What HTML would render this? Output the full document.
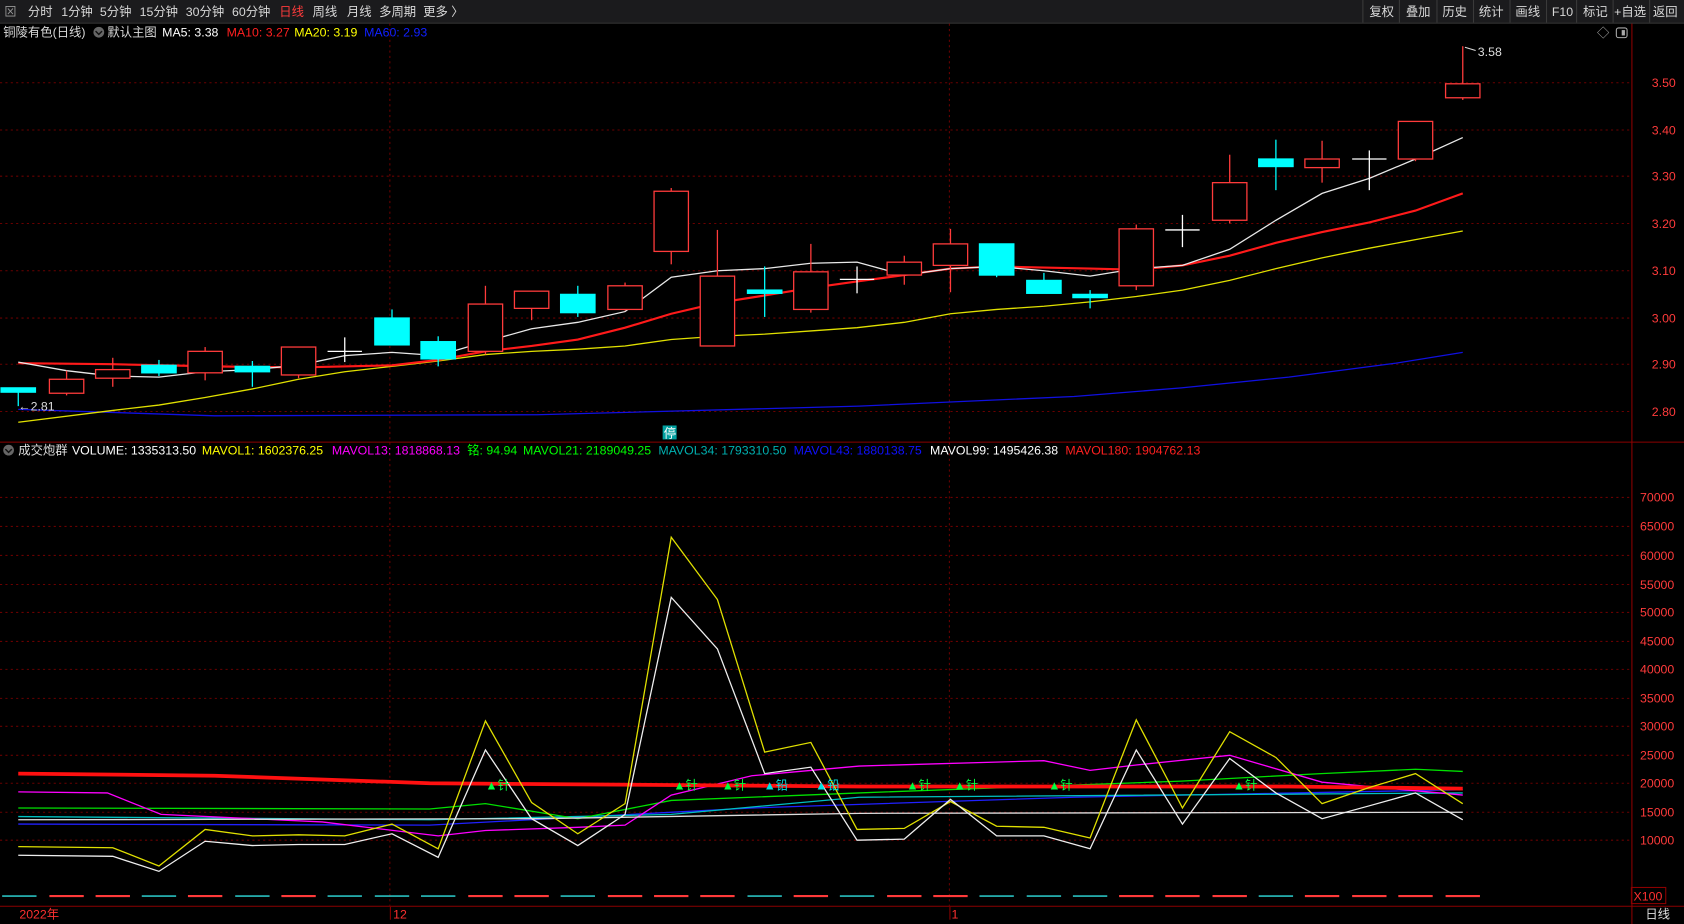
<!DOCTYPE html>
<html><head><meta charset="utf-8"><style>
html,body{margin:0;padding:0;background:#000;overflow:hidden}
svg{display:block}
text{font-family:"Liberation Sans","Noto Sans CJK SC",sans-serif;font-size:11.5px}
</style></head><body>
<svg width="1684" height="924" viewBox="0 0 1568 860" preserveAspectRatio="none" xmlns="http://www.w3.org/2000/svg">
<rect width="1568" height="860" fill="#000"/>
<!-- toolbar -->
<rect x="0" y="0" width="1568" height="21" fill="#1b1b1d"/>
<line x1="0" y1="21.5" x2="1568" y2="21.5" stroke="#3a3a3a"/>
<g fill="#d8d8d8">
<text x="4" y="15" font-size="10" fill="#999">⊠</text>
<text x="26" y="15">分时</text><text x="57" y="15">1分钟</text><text x="93" y="15">5分钟</text>
<text x="130" y="15">15分钟</text><text x="173" y="15">30分钟</text><text x="216" y="15">60分钟</text>
<text x="260" y="15" fill="#ff3b3b">日线</text><text x="291" y="15">周线</text><text x="323" y="15">月线</text>
<text x="353" y="15">多周期</text><text x="394" y="15">更多 〉</text>
</g>
<g stroke="#3a3a3a"><line x1="1269" y1="0" x2="1269" y2="21"/><line x1="1303" y1="0" x2="1303" y2="21"/><line x1="1338" y1="0" x2="1338" y2="21"/><line x1="1372" y1="0" x2="1372" y2="21"/><line x1="1406" y1="0" x2="1406" y2="21"/><line x1="1440" y1="0" x2="1440" y2="21"/><line x1="1468" y1="0" x2="1468" y2="21"/><line x1="1502" y1="0" x2="1502" y2="21"/><line x1="1536" y1="0" x2="1536" y2="21"/></g>
<g fill="#d8d8d8" font-size="11">
<text x="1275" y="15" font-size="11">复权</text><text x="1309" y="15" font-size="11">叠加</text><text x="1343" y="15" font-size="11">历史</text><text x="1377" y="15" font-size="11">统计</text>
<text x="1411" y="15" font-size="11">画线</text><text x="1445" y="15" font-size="11">F10</text><text x="1474" y="15" font-size="11">标记</text><text x="1503" y="15" font-size="11">+自选</text><text x="1539" y="15" font-size="11">返回</text>
</g>
<!-- info line -->
<text x="3" y="34" fill="#d8d8d8">铜陵有色(日线)</text>
<circle cx="92" cy="30" r="5" fill="#666"/><path d="M89 29 L92 32 L95 29" stroke="#111" fill="none" stroke-width="1.3"/>
<text x="100" y="34" fill="#d8d8d8">默认主图</text>
<text x="151" y="34" fill="#fff">MA5: 3.38</text>
<text x="211" y="34" fill="#ff2020">MA10: 3.27</text>
<text x="274" y="34" fill="#ffff00">MA20: 3.19</text>
<text x="339" y="34" fill="#1020ff">MA60: 2.93</text>
<text x="1487" y="35" fill="#aaa" font-size="11">◇</text>
<rect x="1505" y="26" width="10" height="9" rx="2" fill="none" stroke="#aaa"/><rect x="1510" y="28" width="3" height="5" fill="#aaa"/>
<!-- frame -->
<g stroke="#8b0000" fill="none">
<line x1="1519.5" y1="22" x2="1519.5" y2="860"/>
<line x1="0" y1="411.5" x2="1568" y2="411.5"/>
<line x1="0" y1="843.5" x2="1568" y2="843.5"/>
</g>
<!-- grid -->
<g stroke="#6a0000" stroke-dasharray="2,3">
<line x1="0" y1="77" x2="1519" y2="77"/><line x1="0" y1="121" x2="1519" y2="121"/><line x1="0" y1="164" x2="1519" y2="164"/><line x1="0" y1="208" x2="1519" y2="208"/><line x1="0" y1="252" x2="1519" y2="252"/><line x1="0" y1="296" x2="1519" y2="296"/><line x1="0" y1="339" x2="1519" y2="339"/><line x1="0" y1="383" x2="1519" y2="383"/>
<line x1="0" y1="463" x2="1519" y2="463"/><line x1="0" y1="490" x2="1519" y2="490"/><line x1="0" y1="517" x2="1519" y2="517"/><line x1="0" y1="544" x2="1519" y2="544"/><line x1="0" y1="570" x2="1519" y2="570"/><line x1="0" y1="597" x2="1519" y2="597"/><line x1="0" y1="623" x2="1519" y2="623"/><line x1="0" y1="650" x2="1519" y2="650"/><line x1="0" y1="676" x2="1519" y2="676"/><line x1="0" y1="703" x2="1519" y2="703"/><line x1="0" y1="729" x2="1519" y2="729"/><line x1="0" y1="756" x2="1519" y2="756"/><line x1="0" y1="782" x2="1519" y2="782"/>
<line x1="363" y1="22" x2="363" y2="843"/><line x1="884" y1="22" x2="884" y2="843"/>
</g>
<line x1="363.5" y1="844" x2="363.5" y2="856" stroke="#8b0000"/><line x1="884.5" y1="844" x2="884.5" y2="856" stroke="#8b0000"/>
<g fill="#ff3b3b" font-size="11">
<text x="1538" y="81">3.50</text><text x="1538" y="125">3.40</text><text x="1538" y="168">3.30</text><text x="1538" y="212">3.20</text><text x="1538" y="256">3.10</text><text x="1538" y="300">3.00</text><text x="1538" y="343">2.90</text><text x="1538" y="387">2.80</text>
<text x="1527" y="467">70000</text><text x="1527" y="494">65000</text><text x="1527" y="521">60000</text><text x="1527" y="548">55000</text><text x="1527" y="574">50000</text><text x="1527" y="601">45000</text><text x="1527" y="627">40000</text><text x="1527" y="654">35000</text><text x="1527" y="680">30000</text><text x="1527" y="707">25000</text><text x="1527" y="733">20000</text><text x="1527" y="760">15000</text><text x="1527" y="786">10000</text>
</g>
<!-- MA lines -->
<polyline fill="none" stroke="#1010e0" stroke-width="1.2" points="17,381 200,387 500,386 800,378 1000,369 1100,361 1200,351 1300,338 1362,328"/>
<polyline fill="none" stroke="#e0e000" stroke-width="1.2" points="17,393 105,382 148,377 191,370 235,362 278,353 321,346 365,341 408,336 452,330 495,327 538,325 582,322 625,316 668,313 712,311 755,308 798,305 842,300 885,292 928,288 972,285 1015,281 1058,276 1101,270 1145,261 1188,250 1231,240 1275,231 1318,223 1362,215"/>
<polyline fill="none" stroke="#ff1a1a" stroke-width="2" points="17,338 105,339 200,341 278,342 365,340 408,335 452,327 495,322 538,316 582,305 625,292 668,282 712,275 755,268 798,262 842,256 885,250 928,248 972,249 1015,250 1058,251 1101,247 1145,238 1188,226 1231,216 1275,207 1318,196 1362,180"/>
<polyline fill="none" stroke="#e8e8e8" stroke-width="1.2" points="17,337 62,345 105,350 148,351 191,346 235,344 278,340 321,331 365,328 408,331 452,318 495,306 538,300 582,290 625,258 668,252 712,250 755,245 798,244 842,256 885,250 928,248 972,252 1015,257 1058,250 1101,247 1145,232 1188,205 1231,180 1275,166 1318,148 1362,128"/>
<!-- candles -->
<g stroke-width="1.2">
<g stroke="#ff3b3b" fill="#000">
<line x1="62" y1="345" x2="62" y2="368"/><rect x="46" y="353" width="32" height="13"/>
<line x1="105" y1="333" x2="105" y2="360"/><rect x="89" y="344" width="32" height="8"/>
<line x1="191" y1="323" x2="191" y2="354"/><rect x="175" y="327" width="32" height="20"/>
<line x1="278" y1="323" x2="278" y2="352"/><rect x="262" y="323" width="32" height="26"/>
<line x1="452" y1="266" x2="452" y2="330"/><rect x="436" y="283" width="32" height="44"/>
<line x1="495" y1="271" x2="495" y2="298"/><rect x="479" y="271" width="32" height="16"/>
<line x1="582" y1="263" x2="582" y2="289"/><rect x="566" y="266" width="32" height="22"/>
<line x1="625" y1="175" x2="625" y2="246"/><rect x="609" y="178" width="32" height="56"/>
<line x1="668" y1="214" x2="668" y2="322"/><rect x="652" y="257" width="32" height="65"/>
<line x1="755" y1="227" x2="755" y2="291"/><rect x="739" y="253" width="32" height="35"/>
<line x1="842" y1="238" x2="842" y2="265"/><rect x="826" y="244" width="32" height="12"/>
<line x1="885" y1="213" x2="885" y2="272"/><rect x="869" y="227" width="32" height="20"/>
<line x1="1058" y1="209" x2="1058" y2="270"/><rect x="1042" y="213" width="32" height="53"/>
<line x1="1145" y1="144" x2="1145" y2="208"/><rect x="1129" y="170" width="32" height="35"/>
<line x1="1231" y1="131" x2="1231" y2="170"/><rect x="1215" y="148" width="32" height="8"/>
<line x1="1318" y1="113" x2="1318" y2="150"/><rect x="1302" y="113" width="32" height="35"/>
<line x1="1362" y1="43" x2="1362" y2="93"/><rect x="1346" y="78" width="32" height="13"/>
</g>
<g stroke="#00ffff" fill="#00ffff">
<line x1="17" y1="361" x2="17" y2="378"/><rect x="1" y="361" width="32" height="4"/>
<line x1="148" y1="335" x2="148" y2="350"/><rect x="132" y="340" width="32" height="7"/>
<line x1="235" y1="336" x2="235" y2="360"/><rect x="219" y="341" width="32" height="5"/>
<line x1="365" y1="288" x2="365" y2="321"/><rect x="349" y="296" width="32" height="25"/>
<line x1="408" y1="313" x2="408" y2="341"/><rect x="392" y="318" width="32" height="16"/>
<line x1="538" y1="266" x2="538" y2="295"/><rect x="522" y="274" width="32" height="17"/>
<line x1="712" y1="248" x2="712" y2="295"/><rect x="696" y="270" width="32" height="3"/>
<line x1="928" y1="227" x2="928" y2="258"/><rect x="912" y="227" width="32" height="29"/>
<line x1="972" y1="254" x2="972" y2="273"/><rect x="956" y="261" width="32" height="12"/>
<line x1="1015" y1="270" x2="1015" y2="287"/><rect x="999" y="274" width="32" height="3"/>
<line x1="1188" y1="130" x2="1188" y2="177"/><rect x="1172" y="148" width="32" height="7"/>
</g>
<g stroke="#fff">
<line x1="321" y1="314" x2="321" y2="337"/><line x1="305" y1="327" x2="337" y2="327"/>
<line x1="798" y1="248" x2="798" y2="273"/><line x1="782" y1="260" x2="814" y2="260"/>
<line x1="1101" y1="200" x2="1101" y2="230"/><line x1="1085" y1="214" x2="1117" y2="214"/>
<line x1="1275" y1="140" x2="1275" y2="177"/><line x1="1259" y1="148" x2="1291" y2="148"/>
</g>
</g>
<text x="1376" y="52" fill="#ddd" font-size="11">3.58</text><path d="M1364 44 L1374 47" stroke="#ddd"/>
<text x="17" y="382" fill="#ddd" font-size="11">←2.81</text>
<rect x="617" y="396" width="13" height="13" fill="#00a0a0"/><text x="618" y="407" fill="#fff" font-size="10">停</text>
<!-- volume header -->
<circle cx="8" cy="419" r="5" fill="#666"/><path d="M5 418 L8 421 L11 418" stroke="#111" fill="none" stroke-width="1.3"/>
<text x="17" y="423" fill="#ddd">成交炮群</text>
<text x="67" y="423" fill="#fff">VOLUME: 1335313.50</text>
<text x="188" y="423" fill="#ffff00">MAVOL1: 1602376.25</text>
<text x="309" y="423" fill="#ff00ff">MAVOL13: 1818868.13</text>
<text x="435" y="423" fill="#00ff00">铭: 94.94</text>
<text x="487" y="423" fill="#00ff00">MAVOL21: 2189049.25</text>
<text x="613" y="423" fill="#00b0b0">MAVOL34: 1793310.50</text>
<text x="739" y="423" fill="#1010ff">MAVOL43: 1880138.75</text>
<text x="866" y="423" fill="#fff">MAVOL99: 1495426.38</text>
<text x="992" y="423" fill="#ff2020">MAVOL180: 1904762.13</text>
<!-- volume lines -->
<polyline fill="none" stroke="#2020ff" stroke-width="1.2" points="17,767 400,768 700,752 1000,742 1362,735"/>
<polyline fill="none" stroke="#00c0c0" stroke-width="1.2" points="17,760 400,763 625,758 800,742 1362,738"/>
<polyline fill="none" stroke="#00e000" stroke-width="1.2" points="17,752 400,753 452,748 538,762 625,745 800,738 1100,727 1230,720 1318,716 1362,718"/>
<polyline fill="none" stroke="#ff00ff" stroke-width="1.2" points="17,737 100,738 150,758 300,765 408,778 452,773 538,770 582,768 625,740 700,722 800,713 972,708 1015,717 1058,712 1145,703 1231,728 1362,740"/>
<polyline fill="none" stroke="#ddd" stroke-width="1.2" points="17,763 500,762 800,757 1362,756"/>
<polyline fill="none" stroke="#ff1010" stroke-width="3.5" points="17,720 200,722 400,729 800,732 1200,732 1362,734"/>
<polyline fill="none" stroke="#e0e000" stroke-width="1.2" points="17,788 105,789 148,806 191,772 235,778 278,777 321,778 365,767 408,790 452,671 495,747 538,776 582,748 625,500 668,558 712,700 755,691 798,772 842,771 885,746 928,769 972,770 1015,780 1058,670 1101,752 1145,681 1188,705 1231,748 1275,733 1318,720 1362,748"/>
<polyline fill="none" stroke="#eee" stroke-width="1.2" points="17,796 105,797 148,811 191,783 235,787 278,786 321,786 365,776 408,798 452,698 495,762 538,787 582,758 625,556 668,604 712,720 755,714 798,782 842,781 885,744 928,778 972,778 1015,790 1058,698 1101,767 1145,706 1188,738 1231,762 1275,750 1318,738 1362,763"/>
<g fill="#00ff40" font-size="10">
<text x="452" y="735">▲针</text><text x="627" y="735">▲针</text><text x="672" y="735">▲针</text><text x="711" y="735" fill="#00e0e0">▲铅</text><text x="759" y="735" fill="#00e0e0">▲铅</text><text x="844" y="735">▲针</text><text x="888" y="735">▲针</text><text x="976" y="735">▲针</text><text x="1148" y="735">▲针</text>
</g>
<!-- bottom dashes per bar -->
<g stroke-width="2">
<g stroke="#30e0e0" stroke-width="1.3">
<line x1="2" y1="834" x2="34" y2="834"/><line x1="132" y1="834" x2="164" y2="834"/><line x1="219" y1="834" x2="251" y2="834"/><line x1="305" y1="834" x2="337" y2="834"/><line x1="349" y1="834" x2="381" y2="834"/><line x1="392" y1="834" x2="424" y2="834"/><line x1="522" y1="834" x2="554" y2="834"/><line x1="696" y1="834" x2="728" y2="834"/><line x1="782" y1="834" x2="814" y2="834"/><line x1="912" y1="834" x2="944" y2="834"/><line x1="956" y1="834" x2="988" y2="834"/><line x1="999" y1="834" x2="1031" y2="834"/><line x1="1172" y1="834" x2="1204" y2="834"/>
</g>
<g stroke="#ff3a3a">
<line x1="46" y1="834" x2="78" y2="834"/><line x1="89" y1="834" x2="121" y2="834"/><line x1="175" y1="834" x2="207" y2="834"/><line x1="262" y1="834" x2="294" y2="834"/><line x1="436" y1="834" x2="468" y2="834"/><line x1="479" y1="834" x2="511" y2="834"/><line x1="566" y1="834" x2="598" y2="834"/><line x1="609" y1="834" x2="641" y2="834"/><line x1="652" y1="834" x2="684" y2="834"/><line x1="739" y1="834" x2="771" y2="834"/><line x1="826" y1="834" x2="858" y2="834"/><line x1="869" y1="834" x2="901" y2="834"/><line x1="1042" y1="834" x2="1074" y2="834"/><line x1="1085" y1="834" x2="1117" y2="834"/><line x1="1129" y1="834" x2="1161" y2="834"/><line x1="1215" y1="834" x2="1247" y2="834"/><line x1="1259" y1="834" x2="1291" y2="834"/><line x1="1302" y1="834" x2="1334" y2="834"/><line x1="1346" y1="834" x2="1378" y2="834"/>
</g>
</g>
<!-- bottom axis -->
<rect x="1519" y="826" width="32" height="15" fill="none" stroke="#8b0000"/>
<text x="1521" y="838" fill="#ff3030" font-size="10.5">X100</text>
<text x="18" y="855" fill="#ff3030" font-size="11">2022年</text>
<text x="366" y="855" fill="#ff3030" font-size="11">12</text>
<text x="886" y="855" fill="#ff3030" font-size="11">1</text>
<text x="1532" y="855" fill="#ddd">日线</text>
</svg>
</body></html>
